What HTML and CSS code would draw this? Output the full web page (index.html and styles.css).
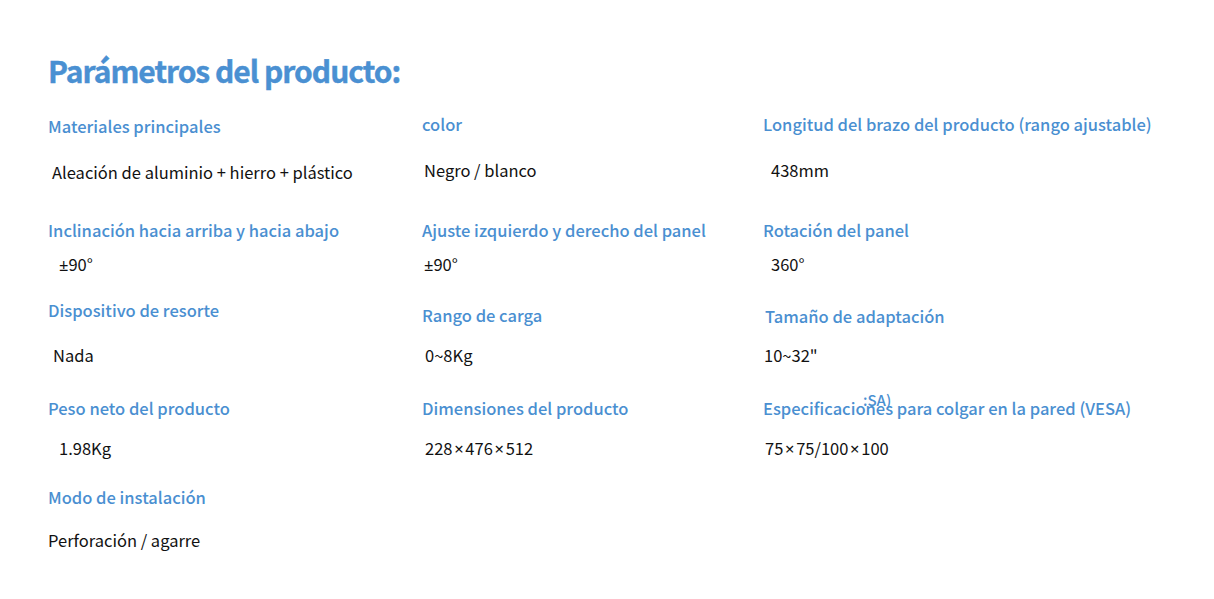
FILE: index.html
```html
<!DOCTYPE html>
<html lang="es">
<head>
<meta charset="utf-8">
<title>Parámetros del producto</title>
<link rel="stylesheet" href="styles.css">
</head>
<body>
<main class="page">
  <h1 class="title">Parámetros del producto:</h1>
  <section class="params">
    <div class="cell r1 c1"><div class="label">Materiales principales</div><div class="value in4">Aleación de aluminio + hierro + plástico</div></div>
    <div class="cell r1"><div class="label">color</div><div class="value in2">Negro / blanco</div></div>
    <div class="cell r1"><div class="label">Longitud del brazo del producto (rango ajustable)</div><div class="value in8">438mm</div></div>

    <div class="cell r2"><div class="label">Inclinación hacia arriba y hacia abajo</div><div class="value in11"><span class="sym">±</span>90°</div></div>
    <div class="cell r2"><div class="label">Ajuste izquierdo y derecho del panel</div><div class="value in2"><span class="sym">±</span>90°</div></div>
    <div class="cell r2"><div class="label">Rotación del panel</div><div class="value in8">360°</div></div>

    <div class="cell r3"><div class="label">Dispositivo de resorte</div><div class="value in5">Nada</div></div>
    <div class="cell r3 shift5"><div class="label">Rango de carga</div><div class="value in3">0~8Kg</div></div>
    <div class="cell r3 shift6"><div class="label in2">Tamaño de adaptación</div><div class="value in1">10~32"</div></div>

    <div class="cell r4"><div class="label">Peso neto del producto</div><div class="value in11">1.98Kg</div></div>
    <div class="cell r4"><div class="label">Dimensiones del producto</div><div class="value in3">228<span class="sym times">×</span>476<span class="sym times">×</span>512</div></div>
    <div class="cell r4 overlay-host"><span class="ghost">:SA)</span><div class="label">Especificaciones para colgar en la pared (VESA)</div><div class="value in2">75<span class="sym times">×</span>75/100<span class="sym times">×</span>100</div></div>

    <div class="cell r5"><div class="label">Modo de instalación</div><div class="value">Perforación / agarre</div></div>
  </section>
</main>
</body>
</html>
```
FILE: styles.css
```css
html, body {
  margin: 0;
  padding: 0;
  background: #ffffff;
}
body {
  font-family: "Noto Sans CJK SC", "Noto Sans", sans-serif;
  color: #111111;
}
.page {
  padding: 50px 0 0 48px;
}
.title {
  margin: 0;
  font-size: 30px;
  line-height: 40px;
  font-weight: 700;
  letter-spacing: -1px;
  color: #4a90d2;
  -webkit-text-stroke: 0.4px #4a90d2;
}
.params {
  margin-top: 22px;
  display: grid;
  grid-template-columns: 374px 341px 1fr;
  grid-template-rows: 106px 80px 98px 89px auto;
}
.cell {
  display: flex;
  flex-direction: column;
  align-items: flex-start;
}
.cell > * { flex-shrink: 0; }
.label {
  font-size: 16.5px;
  line-height: 24px;
  font-weight: 500;
  color: #4a8fd1;
  white-space: nowrap;
}
.value {
  font-size: 16.5px;
  line-height: 24px;
  font-weight: 400;
  color: #111111;
  white-space: nowrap;
}
.sym {
  font-family: "Noto Sans", "DejaVu Sans", sans-serif;
}
.times {
  margin: 0 1.7px;
}
.r1 .value { margin-top: 22px; }
.r1.c1 { padding-top: 2px; }
.r2 .value { margin-top: 10px; }
.r3 .value { margin-top: 21px; }
.r3.shift5 { padding-top: 5px; }
.r3.shift5 .value { margin-top: 16px; }
.r3.shift6 { padding-top: 6px; }
.r3.shift6 .value { margin-top: 15px; }
.r4 .value { margin-top: 16px; }
.r5 .value { margin-top: 19px; }

.in1 { padding-left: 1px; }
.in2 { padding-left: 2px; }
.in3 { padding-left: 3px; }
.in4 { padding-left: 4px; }
.in5 { padding-left: 5px; }
.in8 { padding-left: 8px; }
.in11 { padding-left: 11px; }

.overlay-host { position: relative; }
.overlay-host .label { position: relative; }
.ghost {
  position: absolute;
  left: 100px;
  top: -5px;
  font-size: 15px;
  line-height: 18px;
  font-weight: 500;
  color: #4a8fd1;
}
```
